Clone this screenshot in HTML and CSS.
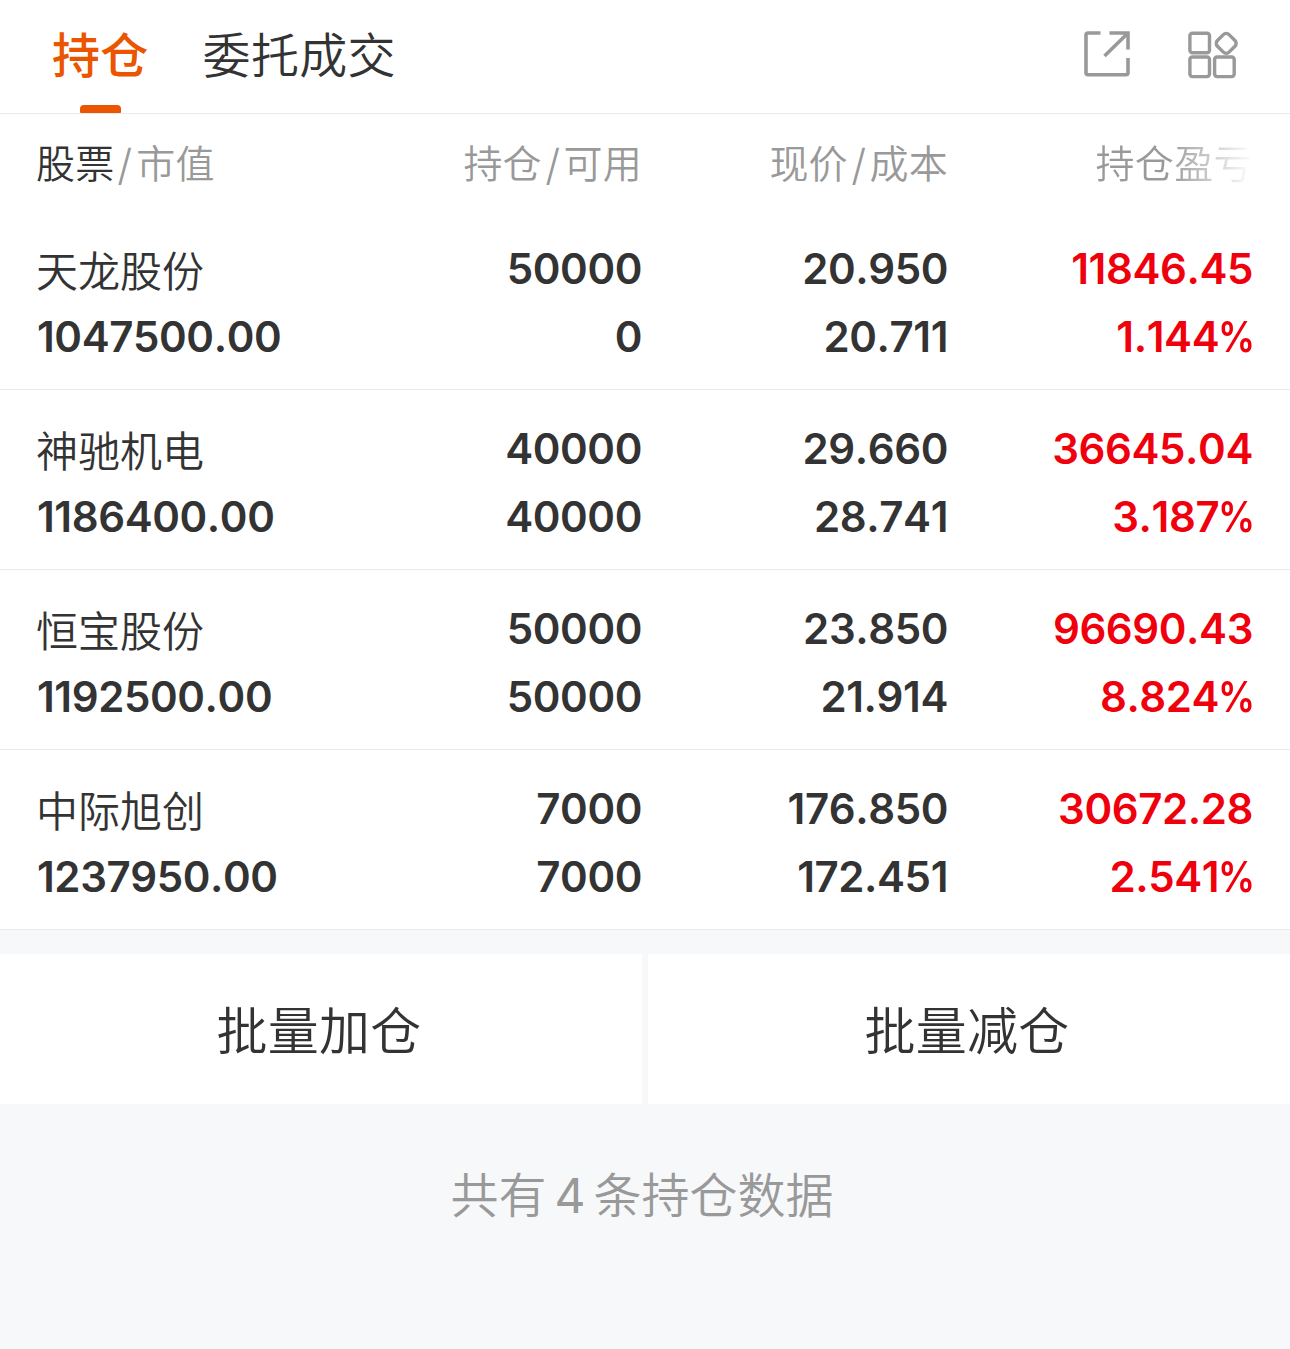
FILE: index.html
```html
<!DOCTYPE html>
<html lang="zh-CN">
<head>
    <meta charset="UTF-8">
    <meta name="viewport" content="width=device-width, initial-scale=1.0">
    <title>持仓</title>
    <link rel="stylesheet" href="styles.css">
</head>
<body>
    <header class="tabs">
        <a class="tab active">持仓</a>
        <a class="tab">委托成交</a>
        <div class="tools">
            <svg class="icon" width="50" height="50" viewBox="0 0 50 50" fill="none" stroke="#999999" stroke-width="3.6">
                <path d="M18.500 3H6Q4 3 4 5V42.800Q4 44.800 6 44.800H44Q46 44.800 46 42.800V28"/>
                <path d="M27.500 3H46V19.500"/>
                <path d="M45 4L22.500 26"/>
            </svg>
            <svg class="icon" width="52" height="50" viewBox="0 0 52 50" fill="none" stroke="#999999" stroke-width="3.4">
                <rect x="3.900" y="3.200" width="19.600" height="19.600" rx="2.500"/>
                <rect x="3.900" y="27" width="19.600" height="19.600" rx="2.500"/>
                <rect x="28.600" y="27" width="19.600" height="19.600" rx="2.500"/>
                <rect x="32" y="5.200" width="16.400" height="16.400" rx="4" transform="rotate(45 40.200 13.400)"/>
            </svg>
        </div>
    </header>

    <main>
        <div class="row head">
            <div class="cell"><b>股票</b><i>/</i>市值</div>
            <div class="cell">持仓<i>/</i>可用</div>
            <div class="cell">现价<i>/</i>成本</div>
            <div class="cell fade">持仓盈亏</div>
        </div>
        <div class="row">
            <div class="cell"><span class="name">天龙股份</span><span>1047500.00</span></div>
            <div class="cell"><span>50000</span><span>0</span></div>
            <div class="cell"><span>20.950</span><span>20.711</span></div>
            <div class="cell up"><span>11846.45</span><span>1.144<em>%</em></span></div>
        </div>
        <div class="row">
            <div class="cell"><span class="name">神驰机电</span><span>1186400.00</span></div>
            <div class="cell"><span>40000</span><span>40000</span></div>
            <div class="cell"><span>29.660</span><span>28.741</span></div>
            <div class="cell up"><span>36645.04</span><span>3.187<em>%</em></span></div>
        </div>
        <div class="row">
            <div class="cell"><span class="name">恒宝股份</span><span>1192500.00</span></div>
            <div class="cell"><span>50000</span><span>50000</span></div>
            <div class="cell"><span>23.850</span><span>21.914</span></div>
            <div class="cell up"><span>96690.43</span><span>8.824<em>%</em></span></div>
        </div>
        <div class="row">
            <div class="cell"><span class="name">中际旭创</span><span>1237950.00</span></div>
            <div class="cell"><span>7000</span><span>7000</span></div>
            <div class="cell"><span>176.850</span><span>172.451</span></div>
            <div class="cell up"><span>30672.28</span><span>2.541<em>%</em></span></div>
        </div>
    </main>

    <div class="actions">
        <button class="action-btn">批量加仓</button>
        <button class="action-btn">批量减仓</button>
    </div>

    <p class="summary">共有<span class="count">4</span>条持仓数据</p>
</body>
</html>
```

FILE: styles.css
```css
* {
    box-sizing: border-box;
}
body {
    margin: 0;
    min-height: 100vh;
    background-color: #f7f8fa;
    color: #333333;
    font-family: Inter, "Noto Sans CJK SC", sans-serif;
}
.tabs {
    display: flex;
    height: 114px;
    padding: 0 52px;
    background-color: #ffffff;
    border-bottom: 1px solid #ebebeb;
}
.tab {
    position: relative;
    margin-right: 54px;
    font-size: 48px;
    font-weight: 350;
    line-height: 111px;
    letter-spacing: 0.3px;
}
.tab.active {
    color: #eb5500;
    font-weight: 500;
}
.tab.active::after {
    content: "";
    position: absolute;
    left: 28px;
    bottom: 0;
    width: 41px;
    height: 8px;
    border-radius: 4px 4px 1px 1px;
    background-color: #eb5500;
}
.tools {
    display: flex;
    gap: 54px;
    margin-left: auto;
    padding-top: 30px;
}
.icon {
    display: block;
}
.row {
    display: grid;
    grid-template-columns: 300px 305px 306px 305px;
    height: 180px;
    padding: 25px 37px 0;
    background-color: #ffffff;
    border-bottom: 1px solid #ebebeb;
}
.cell {
    display: flex;
    flex-direction: column;
    font-size: 42px;
    font-weight: 600;
    font-kerning: none;
    letter-spacing: -0.4px;
    line-height: 68px;
    text-align: right;
    white-space: nowrap;
}
.cell:first-child {
    text-align: left;
}
.cell .name {
    height: 68px;
    margin-left: -1px;
    padding-top: 3px;
    font-weight: 350;
    letter-spacing: 0;
}
.cell em {
    display: inline-block;
    margin-left: -6px;
    margin-right: -2px;
    font-style: normal;
    transform: scaleX(0.88);
    transform-origin: right;
}
.up {
    color: #f0000c;
}
.head {
    height: 96px;
    padding-top: 15px;
    border-bottom: none;
}
.head .cell {
    display: block;
    color: #999999;
    font-size: 39px;
    font-weight: 350;
    letter-spacing: 0.2px;
    line-height: 70px;
}
.head .cell:first-child {
    margin-left: -1px;
}
.head b {
    color: #333333;
    font-weight: 350;
}
.head i {
    display: inline-block;
    margin: 0 4px;
    font-style: normal;
    transform: translateY(1px) scale(1.1);
}
.head .fade {
    color: transparent;
    letter-spacing: 0.4px;
    background: linear-gradient(to right, #999999 72%, #ffffff 100%);
    background-clip: text;
    -webkit-background-clip: text;
}
.actions {
    display: flex;
    gap: 6px;
    margin-top: 24px;
}
.action-btn {
    flex: 1;
    height: 150px;
    padding: 6px 4px 0 0;
    border: none;
    background-color: #ffffff;
    color: #333333;
    font-family: inherit;
    font-size: 51px;
    font-weight: 350;
    line-height: 144px;
    letter-spacing: 0.3px;
}
.summary {
    margin: 56px 6px 0 0;
    color: #999999;
    font-size: 48px;
    font-weight: 350;
    line-height: 72px;
    text-align: center;
}
.count {
    margin: 0 8px;
    font-weight: 400;
}
```
